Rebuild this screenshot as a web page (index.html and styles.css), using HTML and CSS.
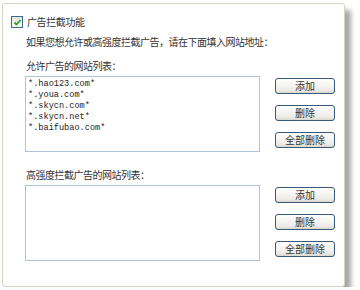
FILE: index.html
```html
<!DOCTYPE html>
<html lang="zh-CN">
<head>
    <meta charset="UTF-8">
    <title>广告拦截功能</title>
    <link rel="stylesheet" href="styles.css">
</head>
<body>
    <div class="panel">
        <label class="toggle">
            <span class="check">
                <svg width="9" height="9" viewBox="0 0 9 9"><path d="M1.5 4.5 L3.5 6.5 L7.5 2" fill="none" stroke="#2aa52a" stroke-width="1.8"/></svg>
            </span>
            广告拦截功能
        </label>
        <p class="hint">如果您想允许或高强度拦截广告，请在下面填入网站地址：</p>

        <p class="caption">允许广告的网站列表：</p>
        <div class="section">
            <div class="list">
                <div>*.hao123.com*</div>
                <div>*.youa.com*</div>
                <div>*.skycn.com*</div>
                <div>*.skycn.net*</div>
                <div>*.baifubao.com*</div>
            </div>
            <div class="actions">
                <button>添加</button>
                <button>删除</button>
                <button>全部删除</button>
            </div>
        </div>

        <p class="caption second">高强度拦截广告的网站列表：</p>
        <div class="section">
            <div class="list"></div>
            <div class="actions">
                <button>添加</button>
                <button>删除</button>
                <button>全部删除</button>
            </div>
        </div>
    </div>
</body>
</html>
```

FILE: styles.css
```css
body {
    margin: 0;
    padding: 3px 0 0 2px;
    background-color: #fff;
    font-family: "Noto Sans CJK SC", "Liberation Sans", sans-serif;
    font-size: 10px;
    color: #333;
}
.panel {
    width: 341px;
    height: 258px;
    padding: 11px 0 13px 0;
    background-color: #fff;
    border: 1px solid #d6d3c2;
    border-radius: 3px;
    box-shadow: 6px 7px 5px rgba(0,0,0,0.35);
}
.toggle {
    display: flex;
    align-items: center;
    height: 14px;
    line-height: 14px;
    margin-left: 8px;
    letter-spacing: -0.4px;
}
.check {
    display: flex;
    align-items: center;
    justify-content: center;
    width: 10px;
    height: 10px;
    margin-right: 4px;
    border: 1px solid #3a6a92;
    background: linear-gradient(#e4e4dc, #fafaf6);
}
p {
    margin: 0;
    line-height: 14px;
    padding-left: 23px;
    letter-spacing: -0.5px;
}
.hint {
    margin-top: 6px;
}
.caption {
    margin-top: 10px;
}
.caption.second {
    margin-top: 16px;
}
.section {
    display: flex;
    margin-top: 3px;
    margin-left: 22px;
}
.list {
    width: 229px;
    height: 70px;
    padding: 2px;
    border: 1px solid #aec3d8;
    font-family: "Liberation Mono", monospace;
    font-size: 8.6px;
    line-height: 11px;
    color: #222;
}
.actions {
    display: flex;
    flex-direction: column;
    gap: 11px;
    margin-left: 15px;
    padding-top: 2px;
}
button {
    width: 60px;
    height: 16px;
    padding: 0;
    border: 1px solid #375878;
    border-radius: 3px;
    background: linear-gradient(#fff, #ecebe6 80%, #d8d6cc);
    font-family: "Noto Sans CJK SC", sans-serif;
    font-size: 10px;
    line-height: 14px;
    color: #333;
}
```
